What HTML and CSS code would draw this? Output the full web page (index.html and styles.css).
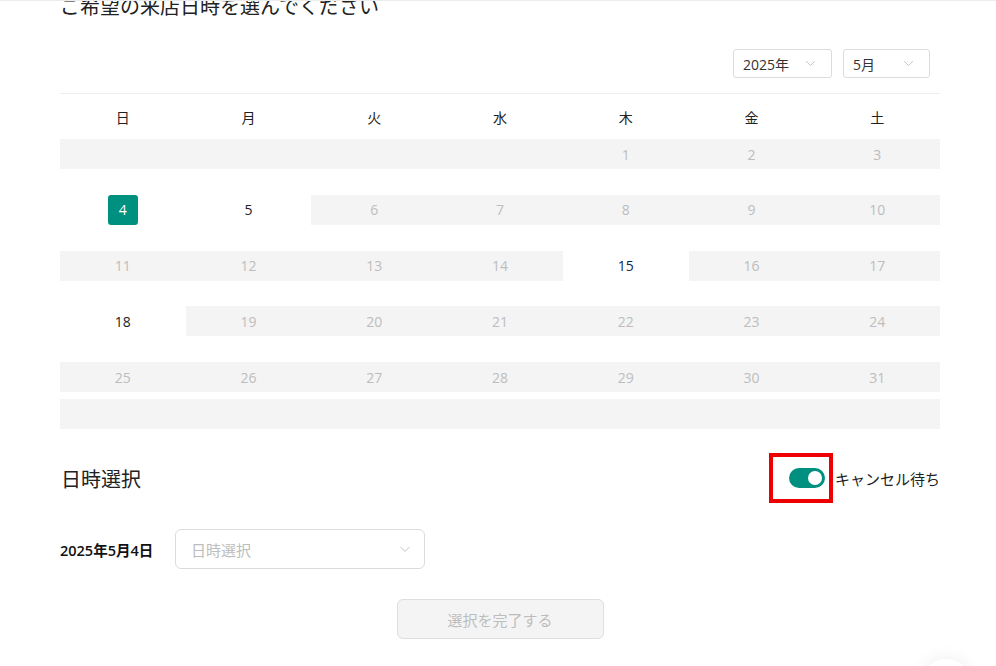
FILE: index.html
```html
<!DOCTYPE html>
<html lang="ja">
<head>
<meta charset="utf-8">
<title>来店日時選択</title>
<link rel="stylesheet" href="styles.css">
</head>
<body>
<div class="page">
  <h1 class="title">ご希望の来店日時を選んでください</h1>

  <div class="pickers">
    <div class="mini-select year"><span>2025年</span><svg class="chev" viewBox="0 0 12 8" width="11" height="7"><path d="M1 1.2 6 6.3 11 1.2" fill="none" stroke="#c4c4c4" stroke-width="1.1"/></svg></div>
    <div class="mini-select month"><span>5月</span><svg class="chev" viewBox="0 0 12 8" width="11" height="7"><path d="M1 1.2 6 6.3 11 1.2" fill="none" stroke="#c4c4c4" stroke-width="1.1"/></svg></div>
  </div>

  <div class="calendar">
    <div class="weekdays">
      <div>日</div><div>月</div><div>火</div><div>水</div><div>木</div><div>金</div><div>土</div>
    </div>
    <div class="week">
      <div class="day off"></div><div class="day off"></div><div class="day off"></div><div class="day off"></div>
      <div class="day off">1</div><div class="day off">2</div><div class="day off">3</div>
    </div>
    <div class="week">
      <div class="day on"><span class="sel">4</span></div><div class="day on">5</div>
      <div class="day off">6</div><div class="day off">7</div><div class="day off">8</div><div class="day off">9</div><div class="day off">10</div>
    </div>
    <div class="week">
      <div class="day off">11</div><div class="day off">12</div><div class="day off">13</div><div class="day off">14</div>
      <div class="day on today">15</div><div class="day off">16</div><div class="day off">17</div>
    </div>
    <div class="week">
      <div class="day on">18</div><div class="day off">19</div><div class="day off">20</div><div class="day off">21</div>
      <div class="day off">22</div><div class="day off">23</div><div class="day off">24</div>
    </div>
    <div class="week">
      <div class="day off">25</div><div class="day off">26</div><div class="day off">27</div><div class="day off">28</div>
      <div class="day off">29</div><div class="day off">30</div><div class="day off">31</div>
    </div>
    <div class="week tail">
      <div class="day off"></div><div class="day off"></div><div class="day off"></div><div class="day off"></div>
      <div class="day off"></div><div class="day off"></div><div class="day off"></div>
    </div>
  </div>

  <div class="section-head">
    <h2 class="section-title">日時選択</h2>
    <div class="wait">
      <div class="highlight"><span class="toggle"><span class="knob"></span></span></div>
      <span class="wait-label">キャンセル待ち</span>
    </div>
  </div>

  <div class="date-row">
    <span class="date-label">2025年5月4日</span>
    <div class="time-select"><span>日時選択</span><svg class="chev" viewBox="0 0 12 8" width="12" height="7"><path d="M1 1.2 6 6.3 11 1.2" fill="none" stroke="#bdbdbd" stroke-width="1.1"/></svg></div>
  </div>

  <div class="actions">
    <button class="done" disabled>選択を完了する</button>
  </div>
</div>
<div class="fab"></div>
</body>
</html>
```

FILE: styles.css
```css
html, body {
  margin: 0;
  padding: 0;
  background: #fff;
  overflow: hidden;
}
body {
  font-family: "Open Sans", "Noto Sans CJK JP", sans-serif;
  color: #222;
  border-top: 1px solid #ececec;
  height: 665px;
}
.page {
  width: 880px;
  margin: 0 0 0 60px;
}
.title {
  margin: -10px 0 0 0;
  font-size: 20px;
  font-weight: 400;
  line-height: 30px;
  color: #222;
  font-family: "Noto Sans CJK JP", sans-serif;
}
.pickers {
  display: flex;
  justify-content: flex-end;
  gap: 11px;
  margin-top: 28px;
  padding-right: 10px;
}
.mini-select {
  box-sizing: border-box;
  height: 29px;
  border: 1px solid #dcdcdc;
  border-radius: 3px;
  display: flex;
  align-items: center;
  justify-content: space-between;
  padding: 0 15px 0 9px;
  font-size: 14px;
  color: #333;
}
.mini-select.year { width: 99px; }
.mini-select.month { width: 87px; }
.calendar {
  margin-top: 15px;
  border-top: 1px solid #eeeeee;
}
.weekdays {
  display: grid;
  grid-template-columns: repeat(7, 1fr);
  height: 45px;
  align-items: center;
  text-align: center;
  font-size: 14px;
  font-family: "Noto Sans CJK JP", sans-serif;
  color: #222;
}
.week {
  display: grid;
  grid-template-columns: repeat(7, 1fr);
  height: 30px;
}
.week + .week { margin-top: 25.75px; }
.week.tail { margin-top: 7px; }
.day {
  display: flex;
  align-items: center;
  justify-content: center;
  font-size: 14px;
}
.day.off {
  background: #f4f4f4;
  color: #bdbdbd;
}
.day.on { color: #222; }
.day.today { color: #12284a; }
.sel {
  width: 30px;
  height: 30px;
  border-radius: 3px;
  background: #00907f;
  color: #fff;
  display: flex;
  align-items: center;
  justify-content: center;
}
.section-head {
  display: flex;
  justify-content: space-between;
  align-items: center;
  margin-top: 24px;
  height: 50px;
}
.section-title {
  margin: 0 0 0 1px;
  font-size: 20px;
  font-weight: 400;
  font-family: "Noto Sans CJK JP", sans-serif;
  color: #222;
}
.wait {
  display: flex;
  align-items: center;
  gap: 2px;
}
.highlight {
  box-sizing: border-box;
  width: 64px;
  height: 50px;
  border: 4px solid #ee0000;
  display: flex;
  align-items: center;
  padding-left: 16px;
}
.toggle {
  position: relative;
  display: block;
  width: 36px;
  height: 20px;
  border-radius: 10px;
  background: #00907f;
}
.knob {
  position: absolute;
  right: 3px;
  top: 3px;
  width: 14px;
  height: 14px;
  border-radius: 50%;
  background: #fff;
}
.wait-label {
  font-size: 15px;
  font-family: "Noto Sans CJK JP", sans-serif;
  color: #222;
}
.date-row {
  display: flex;
  align-items: center;
  margin-top: 26px;
}
.date-label {
  font-size: 14.5px;
  font-weight: 600;
  width: 115px;
  color: #111;
}
.time-select {
  box-sizing: border-box;
  width: 250px;
  height: 40px;
  border: 1px solid #dcdcdc;
  border-radius: 6px;
  display: flex;
  align-items: center;
  justify-content: space-between;
  padding: 0 13px 0 15px;
  font-size: 15px;
  font-family: "Noto Sans CJK JP", sans-serif;
  color: #bdbdbd;
}
.actions {
  display: flex;
  justify-content: center;
  margin-top: 30px;
}
.done {
  width: 207px;
  height: 40px;
  border: 1px solid #dedede;
  border-radius: 6px;
  background: #f4f4f4;
  color: #bdbdbd;
  font-size: 15px;
  font-family: "Noto Sans CJK JP", sans-serif;
}
.fab {
  position: fixed;
  left: 922px;
  top: 659px;
  width: 48px;
  height: 48px;
  border-radius: 50%;
  background: #fff;
  box-shadow: 0 0 18px rgba(0, 0, 0, 0.08);
}
```
